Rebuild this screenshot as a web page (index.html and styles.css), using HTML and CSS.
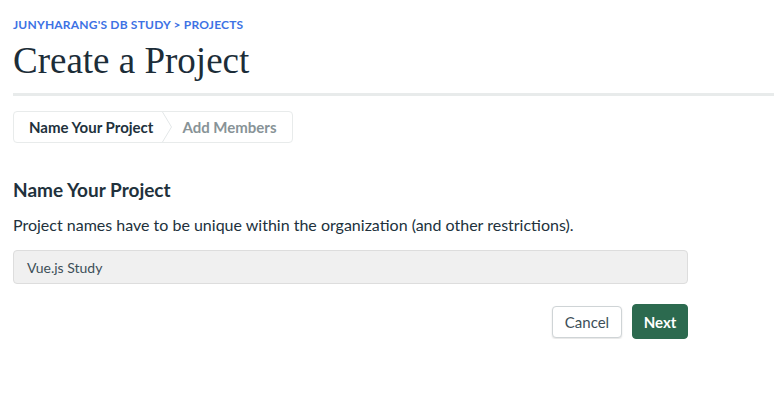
FILE: index.html
```html
<!DOCTYPE html>
<html>
<head>
<meta charset="utf-8">
<link rel="stylesheet" href="styles.css">
</head>
<body>
<div class="page">
  <div class="crumbs">JUNYHARANG'S DB STUDY &gt; PROJECTS</div>
  <h1 class="title">Create a Project</h1>
  <div class="divider"></div>
  <div class="steps">
    <div class="step active">Name Your Project</div>
    <svg class="chev" width="10" height="30" viewBox="0 0 10 30"><path d="M0.5 0 L9.5 15 L0.5 30" fill="none" stroke="#e3e7e8" stroke-width="1"/></svg>
    <div class="step">Add Members</div>
  </div>
  <div class="form">
    <h2 class="heading">Name Your Project</h2>
    <p class="desc">Project names have to be unique within the organization (and other restrictions).</p>
    <div class="input">Vue.js Study</div>
    <div class="actions">
      <button class="btn cancel">Cancel</button>
      <button class="btn next">Next</button>
    </div>
  </div>
</div>
</body>
</html>
```
FILE: styles.css
```css
* { box-sizing: border-box; }
html, body { margin: 0; padding: 0; background: #fff; }
body { font-family: Lato, "Noto Sans", sans-serif; color: #21313c; }
.page { padding: 18px 0 0 13px; }
.crumbs { font-size: 12px; font-weight: 700; color: #3d72e4; letter-spacing: 0.2px; line-height: 14px; }
.title { margin: 8px 0 0 0; font-family: "Liberation Serif", serif; font-weight: 400; font-size: 37px; line-height: 42px; color: #1c2d38; }
.divider { height: 3px; background: #e8ebeb; margin-top: 11px; }
.steps { display: inline-flex; align-items: stretch; margin-top: 15px; height: 32px; border: 1px solid #e8ebeb; border-radius: 4px; }
.step { display: flex; align-items: center; font-size: 15px; font-weight: 700; color: #889397; padding: 0 15px 0 10px; }
.step.active { color: #21313c; padding: 0 9px 0 15px; }
.chev { display: block; flex: none; }
.form { width: 675px; margin-top: 35px; }
.heading { margin: 0; font-size: 19px; font-weight: 700; line-height: 24px; color: #21313c; }
.desc { margin: 13px 0 0; font-size: 16px; line-height: 20px; color: #21313c; }
.input { margin-top: 15px; height: 34px; background: #f0f0f0; border: 1px solid #dddddd; border-radius: 4px; padding: 0 13px; display: flex; align-items: center; font-size: 14px; color: #3d4f58; }
.actions { display: flex; justify-content: flex-end; align-items: center; gap: 10px; margin-top: 20px; }
.btn { font-family: Lato, "Noto Sans", sans-serif; font-size: 15px; border-radius: 4px; cursor: pointer; padding: 0; }
.cancel { height: 32px; width: 70px; background: #fff; border: 1px solid #cfd4d6; box-shadow: 0 1px 2px rgba(0,0,0,0.12); color: #3d4f58; }
.next { height: 35px; width: 56px; background: #2c6a4f; border: 1px solid #2c6a4f; color: #fff; font-weight: 700; }
```
